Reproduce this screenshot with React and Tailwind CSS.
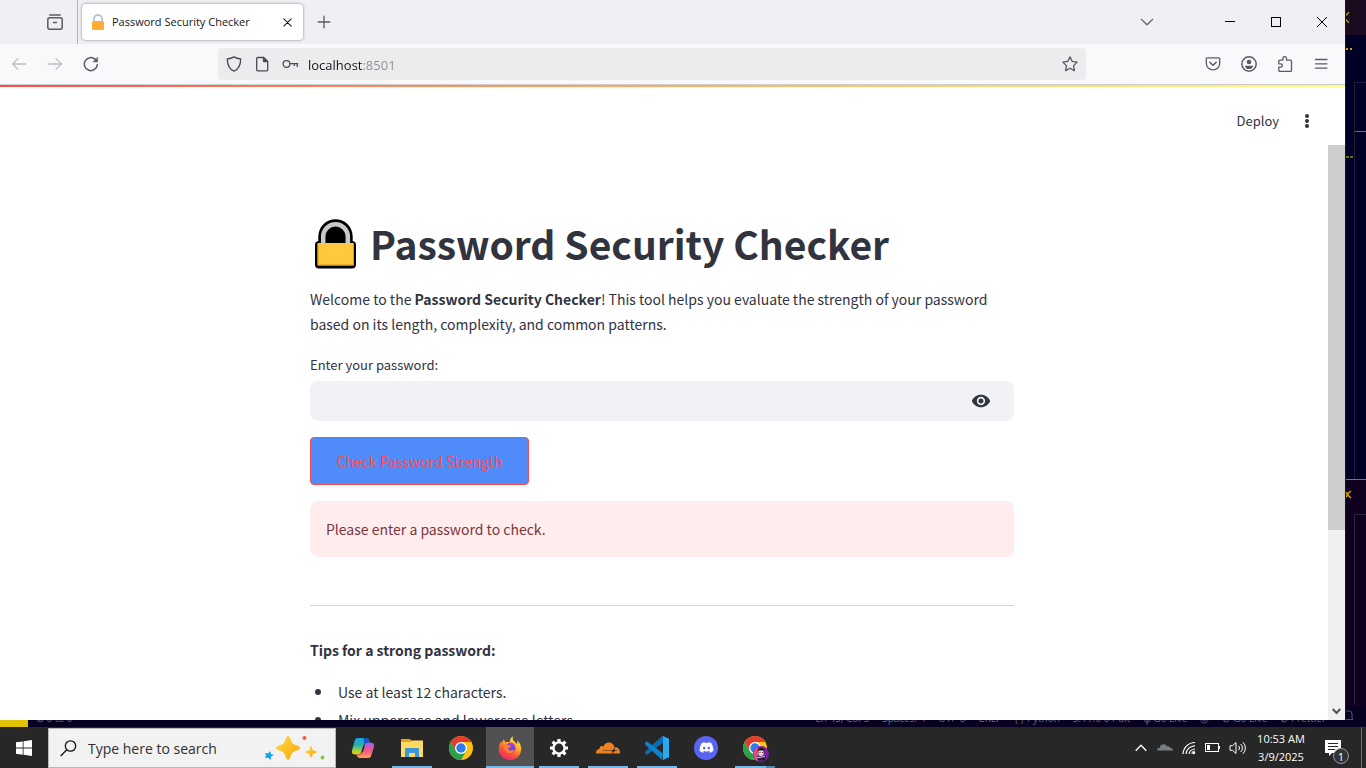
import React from "react";
import { MdVisibility } from "react-icons/md";
import { FaDiscord } from "react-icons/fa";
import { SiCloudflare } from "react-icons/si";

const systemFont = "font-['Open_Sans','Noto_Sans',sans-serif]";
const pageFont = "font-['Noto_Sans_CJK_SC',sans-serif]";

function Line({ children, className = "", size = 16 }) {
  return (
    <svg
      width={size}
      height={size}
      viewBox="0 0 16 16"
      fill="none"
      stroke="currentColor"
      strokeWidth="1.3"
      strokeLinecap="round"
      strokeLinejoin="round"
      className={className}
      aria-hidden="true"
    >
      {children}
    </svg>
  );
}

function TabBar() {
  return (
    <div className="flex h-11 shrink-0 bg-[#f0eff4] text-[#5b5b66]">
      <div className="flex w-[78px] items-center border-r border-[#b5b4bb] pl-[47px]">
        <button type="button" aria-label="Firefox View">
          <Line>
            <path d="M2.8 .9h10.400" strokeWidth="1.5" />
            <rect x="0.8" y="3.8" width="14.4" height="11.4" rx="2" strokeWidth="1.5" />
            <path d="M6.500 8.500h3" strokeWidth="1.5" />
          </Line>
        </button>
      </div>
      <div className="ml-1 mt-1 flex h-9 w-[221px] items-center rounded bg-white pl-2 pr-2 shadow-[0_0_3px_rgba(0,0,0,0.45)]">
        <svg width="16" height="16" viewBox="0 0 16 16" aria-hidden="true">
          <path d="M4 8V5a4 4 0 0 1 8 0v3" fill="none" stroke="#b4c5cf" strokeWidth="1.8" />
          <rect x="2" y="7" width="12" height="9" rx="1.5" fill="#ffac33" />
        </svg>
        <span className="ml-1.5 flex-1 whitespace-nowrap text-[11px] text-[#15141a]">
          Password Security Checker
        </span>
        <button type="button" aria-label="Close tab" className="grid h-4 w-4 place-items-center text-[#15141a]">
          <Line size={9}>
            <path d="M1.5 1.5l13 13M14.5 1.5l-13 13" strokeWidth="1.8" />
          </Line>
        </button>
      </div>
      <button type="button" aria-label="New tab" className="ml-3 grid w-[18px] place-items-center">
        <Line>
          <path d="M8 2.2v11.6M2.2 8h11.6" />
        </Line>
      </button>
      <div className="flex-1" />
      <button type="button" aria-label="List all tabs" className="mr-12 grid w-6 place-items-center">
        <Line>
          <path d="M2.4 5.4L8 10.8l5.6-5.4" />
        </Line>
      </button>
      <div className="flex text-black">
        <button type="button" aria-label="Minimize" className="grid w-[46px] place-items-center">
          <svg width="10" height="10"><path d="M0 4.5h10" stroke="currentColor" /></svg>
        </button>
        <button type="button" aria-label="Maximize" className="grid w-[46px] place-items-center">
          <svg width="10" height="10"><rect x=".5" y=".5" width="9" height="9" fill="none" stroke="currentColor" /></svg>
        </button>
        <button type="button" aria-label="Close" className="grid w-[46px] place-items-center">
          <svg width="10" height="10"><path d="M0 0l10 10M10 0L0 10" stroke="currentColor" /></svg>
        </button>
      </div>
    </div>
  );
}

function Toolbar() {
  return (
    <div className="flex h-[41px] shrink-0 items-center border-b border-[#cccccf] bg-[#f9f9fb] text-[#5b5b66]">
      <div className="flex w-[218px] gap-5 pl-[11px]">
        <button type="button" aria-label="Back" className="text-[#bcbcc2]">
          <Line><path d="M14.6 8H1.6M7 2.6L1.5 8 7 13.4" /></Line>
        </button>
        <button type="button" aria-label="Forward" className="text-[#bcbcc2]">
          <Line><path d="M1.4 8h13M9 2.6L14.5 8 9 13.4" /></Line>
        </button>
        <button type="button" aria-label="Reload">
          <Line>
            <path d="M14.3 8.6a6.5 6.5 0 1 1-2-5.2L13.6 4.700" strokeWidth="1.5" />
            <path d="M14.6 1.4v4.500h-4.500z" fill="currentColor" strokeWidth=".5" />
          </Line>
        </button>
      </div>
      <div className="flex h-8 flex-1 items-center rounded bg-[#ececee] px-2">
        <Line className="text-[#4a4a54]">
          <path d="M8 .9c2 1.300 4.200 1.900 6.700 2.100-.1 6-1.700 10.200-6.700 12.200C3 13.200 1.400 9 1.300 3 3.800 2.800 6 2.200 8 .9z" />
        </Line>
        <Line className="ml-3 text-[#4a4a54]">
          <path d="M3.700 1.500h6l4 4v8.300a1 1 0 0 1-1 1h-9a1 1 0 0 1-1-1V2.500a1 1 0 0 1 1-1z" />
          <path d="M9.500 1.600v4h4.200z" fill="currentColor" />
        </Line>
        <svg width="18" height="16" viewBox="0 0 18 16" fill="none" stroke="#4a4a54" strokeWidth="1.300" className="ml-3" aria-hidden="true">
          <circle cx="4.500" cy="8" r="3.400" />
          <path d="M7.900 7.700h8.300M12.300 8v2M15.300 8v3" />
        </svg>
        <input
          type="text"
          aria-label="Address"
          defaultValue="localhost:8501"
          className="ml-2 h-8 min-w-0 flex-1 bg-[linear-gradient(to_right,#15141a_55px,#8b8b92_55px)] bg-clip-text pt-0.5 text-[13px] text-transparent outline-none"
        />
        <button type="button" aria-label="Bookmark">
          <Line>
            <path d="M8 .9l2.200 4.500 4.900.7-3.500 3.500.8 5L8 12.200l-4.400 2.400.8-5L.9 6.100l4.900-.7z" />
          </Line>
        </button>
      </div>
      <div className="flex w-[259px] justify-end gap-5 pr-4">
        <button type="button" aria-label="Pocket">
          <Line>
            <path d="M2.300 1.800h11.400a1 1 0 0 1 1 1v4.400a6.700 6.700 0 0 1-13.400 0V2.800a1 1 0 0 1 1-1z" />
            <path d="M4.800 6.300L8 9.300l3.200-3" strokeWidth="1.500" />
          </Line>
        </button>
        <button type="button" aria-label="Account">
          <Line>
            <circle cx="8" cy="8" r="7.200" strokeWidth="1.500" />
            <circle cx="8" cy="6" r="2.300" fill="currentColor" stroke="none" />
            <path d="M4 9.700h8c0 2-1.700 3.400-4 3.400s-4-1.400-4-3.400z" fill="currentColor" stroke="none" />
          </Line>
        </button>
        <button type="button" aria-label="Extensions">
          <Line>
            <path d="M1.800 5.200a1 1 0 0 1 1-1h3.100V2.400a1.800 1.800 0 0 1 3.600 0v1.800h4a1 1 0 0 1 1 1v9.200a1 1 0 0 1-1 1H2.800a1 1 0 0 1-1-1v-3.200h1.900a1.700 1.700 0 0 0 0-3.400H1.800z" />
          </Line>
        </button>
        <button type="button" aria-label="Menu">
          <Line><path d="M2.500 3.500h11.500M2.500 7.800h11.500M2.500 12.100h11.500" /></Line>
        </button>
      </div>
    </div>
  );
}

function PadlockEmoji() {
  return (
    <svg width="44" height="52" viewBox="0 -2 44 52" aria-hidden="true" className="shrink-0">
      <path d="M4.300 22v-4.500a17.200 17.200 0 0 1 34.400 0V22a4 4 0 0 1 3.300 4v19.500a4 4 0 0 1-4 4H5a4 4 0 0 1-4-4V26a4 4 0 0 1 3.300-4z" fill="#000" />
      <path d="M9.200 25v-7.500a12.300 12.300 0 0 1 24.600 0V25" fill="none" stroke="#c8c8c8" strokeWidth="4.500" />
      <rect x="3.500" y="24" width="36.500" height="22.500" rx="1" fill="#ffc83d" />
      <path d="M4 25v21h35.500V25" fill="none" stroke="#d79a1c" strokeWidth="1" />
    </svg>
  );
}

function StreamlitPage() {
  return (
    <div className={`flex min-h-0 flex-1 flex-col bg-white text-[#31333f] ${pageFont}`}>
      <div className="h-0.5 shrink-0 bg-gradient-to-r from-[#ff4b4b] to-[#fffd80]" />
      <header className="flex h-[58px] shrink-0 items-center justify-end pr-[30px] pt-2.5">
        <button type="button" className="text-[13px] leading-5">Deploy</button>
        <button type="button" aria-label="Main menu" className="ml-5 grid h-4 w-4 place-items-center">
          <svg width="16" height="16" fill="currentColor">
            <circle cx="8" cy="3" r="2" />
            <circle cx="8" cy="8" r="2" />
            <circle cx="8" cy="13" r="2" />
          </svg>
        </button>
      </header>
      <div className="flex min-h-0 flex-1">
        <main className="min-w-0 flex-1 overflow-hidden pr-1">
          <div className="mx-auto max-w-[736px] px-4 pt-[72px] text-[14px] leading-[25px]">
            <h1 className="flex items-center gap-3 whitespace-nowrap pl-1 text-[39px] font-bold leading-[52px]">
              <PadlockEmoji />
              Password Security Checker
            </h1>
            <p className="mt-[18px]">
              Welcome to the <strong>Password Security Checker</strong>! This tool helps you evaluate the strength
              of your password based on its length, complexity, and common patterns.
            </p>
            <label htmlFor="password" className="mt-[18px] mb-1.5 block text-[13px] leading-5">
              Enter your password:
            </label>
            <div className="flex h-10 items-center rounded-lg bg-[#f0f2f6] pr-[23px]">
              <input id="password" type="password" className="h-10 min-w-0 flex-1 bg-transparent px-3 outline-none" />
              <button type="button" aria-label="Show password">
                <MdVisibility size={20} />
              </button>
            </div>
            <button
              type="button"
              className="mt-4 block h-12 w-[219px] rounded border border-[#ff4b4b] bg-[#4f8bf9] text-[#ff4b4b]"
            >
              Check Password Strength
            </button>
            <div role="alert" className="mt-4 flex h-14 items-center rounded-lg bg-[#ffecec] px-4 text-[#7d353b]">
              Please enter a password to check.
            </div>
            <hr className="mt-12 border-t border-[#d6d6d9]" />
            <p className="mt-8 font-bold">Tips for a strong password:</p>
            <ul className="mt-[15px] leading-7">
              {["Use at least 12 characters.", "Mix uppercase and lowercase letters."].map((tip) => (
                <li
                  key={tip}
                  className="flex items-center gap-[17px] pl-[5px] before:h-1.5 before:w-1.5 before:rounded-full before:bg-[#31333f]"
                >
                  {tip}
                </li>
              ))}
            </ul>
          </div>
        </main>
        <div className="flex w-[17px] shrink-0 flex-col bg-[#f0f0f0]" aria-hidden="true">
          <div className="h-[67%] bg-[#cdcdcd]" />
          <div className="flex-1" />
          <div className="grid h-[17px] place-items-center text-[#505050]">
            <svg width="9" height="7" fill="none" stroke="currentColor" strokeWidth="2"><path d="M.7 1l3.800 4 3.800-4" /></svg>
          </div>
        </div>
      </div>
    </div>
  );
}

function EditorEdge() {
  return (
    <div className="flex w-[21px] shrink-0 flex-col overflow-hidden border-l border-[#17171c] bg-[#000026]" aria-hidden="true">
      <div className="h-[35px] shrink-0 bg-[#1a0b20] pt-3">
        <svg width="4" height="11" fill="none" stroke="#d9a800" strokeWidth="1.200"><path d="M3 0L-2 5.500 3 11" /></svg>
      </div>
      <div className="h-[47px] shrink-0 pt-[13px]">
        <svg width="8" height="3" fill="#c79a12"><rect width="2" height="2" /><rect x="4" width="2" height="2" /></svg>
      </div>
      <div className="flex flex-1">
        <div className="w-2 pt-[74px]">
          <svg width="8" height="2" fill="#6b6a12"><rect width="3" height="2" /><rect x="4" width="3" height="2" /></svg>
        </div>
        <div className="flex-1 border-l border-t border-[#1b1b3c]">
          <div className="mt-12 h-px bg-[#0e91ab]" />
        </div>
      </div>
      <div className="h-px shrink-0 bg-[#e0531f]" />
      <div className="h-[34px] shrink-0 bg-[#10001f] pt-[10px]">
        <svg width="6" height="9" fill="none" stroke="#d9a800" strokeWidth="1.500"><path d="M5 1L1 4.500l4 3.500M0 2l2 2.500L0 7" /></svg>
      </div>
      <div className="flex h-[191px] shrink-0 bg-[#10001f] pl-2">
        <div className="flex-1 border-l border-t border-[#33243d]" />
      </div>
      <div className="h-[15px] shrink-0 bg-[#080021] pt-[5px]">
        <svg width="8" height="10" fill="none" stroke="#525073"><path d="M0 1h3a3 3 0 0 1 3 3v4l1 1.500H0" /></svg>
      </div>
    </div>
  );
}

function EditorStatus() {
  return (
    <div className={`flex h-[7px] shrink-0 items-end overflow-hidden bg-[#080021] text-[10px] text-[#66657a] ${systemFont}`}>
      <div className="h-[22px] w-7 shrink-0 bg-[#e2c400]" />
      <div className="h-[22px] pl-2 leading-[26px]">⊗ 0 ⚠ 0</div>
      <div className="flex h-[22px] flex-1 justify-end gap-[13px] whitespace-nowrap pr-10 leading-[26px]">
        <span>Ln 45, Col 5</span>
        <span>Spaces: 4</span>
        <span>UTF-8</span>
        <span>CRLF</span>
        <span>{"{ }"} Python</span>
        <span>3.11.0 64-bit</span>
        <span>ϕ Go Live</span>
        <span>◎</span>
        <span>⊘ Go Live</span>
        <span>⊘ Prettier</span>
      </div>
    </div>
  );
}

function CopilotIcon() {
  return (
    <svg width="24" height="24" viewBox="0 0 24 24" aria-hidden="true">
      <defs>
        <linearGradient id="cpA" x1="0" y1="0" x2="0" y2="1">
          <stop offset="0" stopColor="#1aa5e8" />
          <stop offset=".45" stopColor="#25b5a5" />
          <stop offset=".8" stopColor="#b8d330" />
          <stop offset="1" stopColor="#f0c51d" />
        </linearGradient>
        <linearGradient id="cpB" x1="0" y1="0" x2="0" y2="1">
          <stop offset="0" stopColor="#a95bea" />
          <stop offset=".5" stopColor="#f0578f" />
          <stop offset="1" stopColor="#ffa34f" />
        </linearGradient>
      </defs>
      <path d="M6.500 2h8.800c1.400 0 2.200.8 2.600 2l1 3h-3.300c-1.600 0-2.500 1-3 2.500L10.500 16c-.6 1.600-1.700 2.500-3.500 2.500H4C1.500 18.500.4 17 1 14.500L3.600 5C4.100 3 5 2 6.500 2z" fill="url(#cpA)" />
      <path d="M12.500 2h2.800c1.400 0 2.200.8 2.600 2l1 3h-3.300c-1.200 0-2 .5-2.500 1.500z" fill="#1456c7" />
      <path d="M17.500 22H8.700c-1.400 0-2.200-.8-2.600-2l-.6-1.500H8c1.600 0 2.800-1 3.300-2.500L13.500 9c.6-1.500 1.700-2.200 3.500-2.200h3c2.500 0 3.600 1.400 3 3.700L20.400 19c-.5 2-1.400 3-2.900 3z" fill="url(#cpB)" />
      <path d="M13.200 9.500L11 16" stroke="#272727" strokeWidth="1.500" />
    </svg>
  );
}

function ExplorerIcon() {
  return (
    <svg width="24" height="24" viewBox="0 0 24 24" aria-hidden="true">
      <path d="M1 3h9l1.500 2H23v4H1z" fill="#e8a20c" />
      <path d="M1 6h9l1.500-1.500H23V21H1z" fill="#ffd866" />
      <path d="M5 21v-8a1 1 0 0 1 1-1h12a1 1 0 0 1 1 1v8h-4v-4H9v4z" fill="#3b97d8" />
    </svg>
  );
}

function ChromeIcon({ avatar = false }) {
  return (
    <svg width="24" height="24" viewBox="0 0 24 24" overflow="visible" aria-hidden="true">
      <circle cx="12" cy="12" r="12" fill="#fbc116" />
      <path d="M12 12L6.800 15 1.600 6A12 12 0 0 1 22.400 6H12z" fill="#e33b2e" />
      <path d="M12 12l5.200 3L12 24A12 12 0 0 1 1.600 6l5.200 9z" fill="#2ba14b" />
      <circle cx="12" cy="12" r="6" fill="#fff" />
      <circle cx="12" cy="12" r="4.700" fill="#2e7cf0" />
      {avatar && (
        <g>
          <circle cx="18" cy="18" r="8" fill="#7b1fa2" />
          <path d="M10.200 18a8 8 0 0 1 5-7.500v15a8 8 0 0 1-5-7.500z" fill="#df4b86" />
          <path d="M14.500 14.500c.6-3.500 6.400-3.500 7 0l-1 2h-5z" fill="#16121c" />
          <path d="M15.500 14.500h5v3.500a2.500 2 0 0 1-5 0z" fill="#f2d9cf" />
          <path d="M13 20.500l5 .5 5-1-1 4.500h-7z" fill="#20202c" />
          <path d="M13 22l9-1.500" stroke="#c9c9d6" />
          <circle cx="17" cy="16.500" r=".5" /><circle cx="19.500" cy="16.500" r=".5" />
        </g>
      )}
    </svg>
  );
}

function FirefoxIcon() {
  return (
    <svg width="24" height="24" viewBox="0 0 24 24" aria-hidden="true">
      <defs>
        <linearGradient id="ffA" x1=".8" y1="0" x2=".25" y2="1">
          <stop offset="0" stopColor="#fff14f" />
          <stop offset=".35" stopColor="#ffb52c" />
          <stop offset=".65" stopColor="#ff5a35" />
          <stop offset="1" stopColor="#ef1f72" />
        </linearGradient>
      </defs>
      <path d="M15.200 0c-1 2-.5 3.800 1 5.200C18 7 18.700 7.500 19 8.500c.5-1.500.3-3 0-4 3 2.200 4.400 5.500 4.200 9C22.900 19.500 18 24 12 24S.7 19.300.7 13.200C.7 9.500 2 7 3.400 5.200l.4 2C4.500 6 5 4.700 5.200 3.500c1.300.8 2 1.800 2.400 3 1.500-.7 2.900-.6 4.200-.1-.2-2.500 1-5 3.400-6.400z" fill="url(#ffA)" />
      <circle cx="12.200" cy="12.400" r="5.300" fill="#7543e6" />
      <path d="M5.500 9c2-1 3.800-.5 5.500.3l2.200.6c-.2 1.600-2.300 1.600-3 2.600-.4 1 .7 2.200 2.500 2 1.500-.1 2.500-.8 4-.2-1 2.300-3 3.300-5 3.200-3.700-.2-6-4-6.200-8.500z" fill="#ff812f" />
      <path d="M11 6.500c3.500-.5 6 1.500 6.500 4.500-1.500-2-3.500-2.500-5-1.500z" fill="#b33de0" />
    </svg>
  );
}

function GearIcon() {
  return (
    <svg width="20" height="20" viewBox="0 0 20 20" fill="none" stroke="#fff" aria-hidden="true">
      <circle cx="10" cy="10" r="5.600" strokeWidth="2.400" />
      <path d="M10 1v3M10 16v3M1 10h3M16 10h3M3.600 3.600l2.200 2.200M14.200 14.200l2.200 2.200M3.600 16.400l2.200-2.200M14.200 5.800l2.200-2.200" strokeWidth="3.200" />
    </svg>
  );
}

function CloudflareIcon() {
  return <SiCloudflare size={24} className="text-[#f38020]" />;
}

function CodeIcon() {
  return (
    <svg width="24" height="24" viewBox="0 0 24 24" aria-hidden="true">
      <path d="M18 6.500L1.800 19 0 17.300v-1.600L17 .2z" fill="#0a6cb4" />
      <path d="M18 17.500L1.800 5.200 0 6.800v1.600L17 23.800z" fill="#0c85d0" />
      <path d="M17 .2c.5-.3 1-.3 1.500 0L24 2.800v18.400l-5.500 2.600c-.5.300-1 .3-1.500 0 .6.100 1-.3 1-1V1.200c0-.7-.4-1.100-1-1z" fill="#2aa8f2" />
      <path d="M17 .2c.6-.1 1 .3 1 1v5.300L12 11z" fill="#0a6cb4" />
    </svg>
  );
}

function DiscordIcon() {
  return (
    <span className="grid h-6 w-6 place-items-center rounded-full bg-[#5865f2] text-white">
      <FaDiscord size={15} />
    </span>
  );
}

const apps = [
  { name: "Copilot", icon: <CopilotIcon /> },
  { name: "File Explorer", icon: <ExplorerIcon />, bar: "w-10" },
  { name: "Google Chrome", icon: <ChromeIcon /> },
  { name: "Firefox", icon: <FirefoxIcon />, bar: "w-12", active: true },
  { name: "Settings", icon: <GearIcon />, bar: "w-10" },
  { name: "Cloudflare WARP", icon: <CloudflareIcon />, bar: "w-10" },
  { name: "Visual Studio Code", icon: <CodeIcon />, bar: "w-10" },
  { name: "Discord", icon: <DiscordIcon /> },
  { name: "Chrome profile", icon: <ChromeIcon avatar />, bar: "w-10", stacked: true },
];

function Sparkles() {
  return (
    <svg width="62" height="26" viewBox="0 0 62 26" aria-hidden="true">
      <defs>
        <linearGradient id="spark" x1="0" y1="0" x2="1" y2="1">
          <stop offset="0" stopColor="#ffdb4d" />
          <stop offset="1" stopColor="#f7a600" />
        </linearGradient>
      </defs>
      <path d="M24 1c1.500 0 2 1.500 3 4.500.9 2.700 1.700 3.500 4.400 4.400 3 1 4.500 1.500 4.500 3s-1.500 2-4.500 3c-2.700.9-3.500 1.700-4.400 4.400-1 3-1.500 4.500-3 4.500s-2-1.500-3-4.500c-.9-2.700-1.700-3.500-4.400-4.400-3-1-4.500-1.500-4.500-3s1.500-2 4.500-3c2.700-.9 3.500-1.700 4.400-4.400 1-3 1.500-4.500 3-4.500z" fill="url(#spark)" />
      <path d="M47 10.500c.8 0 1 4 2 4.800s4 .9 4 1.700-3.200 1-4 1.900-1.200 3.600-2 3.600-1-2.800-2-3.600-4-1.100-4-1.900 3-.9 4-1.700 1.200-4.800 2-4.800z" fill="url(#spark)" />
      <path d="M6 16l1 3 2.800 1-2.600 1.500L6.500 25l-2.300-2.300L1 23l1-2.700L.8 18l3.400.6z" fill="#12a5ee" />
      <circle cx="40.500" cy="3" r="2" fill="#f2602b" />
      <circle cx="58.500" cy="22.500" r="2" fill="#8bc53f" />
    </svg>
  );
}

function Taskbar() {
  return (
    <footer className={`flex h-[41px] shrink-0 bg-[#272727] text-white ${systemFont}`}>
      <button type="button" aria-label="Start" className="grid w-12 shrink-0 place-items-center">
        <svg width="16" height="16" viewBox="0 0 16 16" fill="currentColor">
          <path d="M0 2.300L6.700 1.400v6.200H0zM7.500 1.300L16 0v7.600H7.500zM0 8.400h6.700v6.300L0 13.700zM7.500 8.400H16V16l-8.500-1.200z" />
        </svg>
      </button>
      <form className="mt-px flex w-72 shrink-0 items-center border border-[#b9b9b9] bg-[#f2f2f2] pl-[11px] pr-[9px]" onSubmit={(e) => e.preventDefault()}>
        <svg width="17" height="17" viewBox="0 0 17 17" fill="none" stroke="#111" strokeWidth="1.300" aria-hidden="true">
          <circle cx="10.500" cy="6" r="5.200" />
          <path d="M6.800 9.800L.7 16" />
        </svg>
        <input
          type="text"
          aria-label="Search"
          placeholder="Type here to search"
          className="ml-[11px] min-w-0 flex-1 bg-transparent text-[14px] outline-none placeholder:text-[#2f2f2f]"
        />
        <Sparkles />
      </form>
      <nav className="ml-[3px] flex gap-px" aria-label="Taskbar apps">
        {apps.map((app) => (
          <button
            key={app.name}
            type="button"
            aria-label={app.name}
            className={`flex w-12 flex-col items-center ${app.active ? "bg-[#515151]" : ""}`}
          >
            <span className="grid min-h-0 flex-1 place-items-center pt-0.5">{app.icon}</span>
            <span className={`flex h-0.5 ${app.bar ? `${app.bar} bg-[#76b9ed]` : ""}`}>
              {app.stacked && <span className="ml-auto w-[9px] bg-[#5484a8]" />}
            </span>
          </button>
        ))}
      </nav>
      <div className="ml-auto flex items-center">
        <button type="button" aria-label="Show hidden icons" className="grid w-6 place-items-center">
          <svg width="12" height="8" fill="none" stroke="currentColor" strokeWidth="1.300"><path d="M.7 6.700L6 1.200l5.300 5.500" /></svg>
        </button>
        <button type="button" aria-label="OneDrive" className="grid w-6 place-items-center text-[#777c80]">
          <svg width="16" height="10" viewBox="0 0 16 10" fill="currentColor"><path d="M0 7.500A2.500 2.500 0 0 1 2.800 5 3.500 3.500 0 0 1 6 1.500 3.500 3.500 0 0 1 10 3.500 3 3 0 0 1 13.500 5 2 2 0 0 1 15.800 7.500z" /></svg>
        </button>
        <button type="button" aria-label="Network" className="grid w-6 place-items-center">
          <svg width="14" height="14" viewBox="0 0 14 14" fill="none" stroke="currentColor" strokeWidth="1.200">
            <path d="M1 13A12 12 0 0 1 13 1.500M4 13A9 9 0 0 1 13 4.800M7 13a6 6 0 0 1 6-5" />
            <circle cx="11.700" cy="11.700" r="1.500" fill="currentColor" stroke="none" />
            <path d="M9.500 13a3 3 0 0 1 3.500-2.800" opacity=".5" />
          </svg>
        </button>
        <button type="button" aria-label="Battery" className="grid w-6 place-items-center">
          <svg width="16" height="10" fill="none" stroke="currentColor">
            <rect x=".5" y=".5" width="13" height="8" />
            <path d="M14.500 3v3" />
            <rect x="2" y="2" width="3" height="5" fill="currentColor" stroke="none" />
          </svg>
        </button>
        <button type="button" aria-label="Volume" className="grid w-6 place-items-center">
          <svg width="17" height="14" viewBox="0 0 17 14" fill="none" stroke="currentColor">
            <path d="M1 4.700h2.500L7 1.500v11L3.500 9.300H1zM9.500 4.800a3 3 0 0 1 0 4.400M11.700 3a5.500 5.500 0 0 1 0 8M14 1.200a8.300 8.300 0 0 1 0 11.600" />
          </svg>
        </button>
        <div className="w-16 text-center text-[11px] leading-[18px]">
          <div>10:53 AM</div>
          <div>3/9/2025</div>
        </div>
        <button type="button" aria-label="Notifications" className="relative mr-2 grid h-full w-10 place-items-center">
          <svg width="16" height="16" viewBox="0 0 16 16"><path d="M0 0h16v13H7l-3 3v-3H0z" fill="#fff" /><path d="M3 3.500h10M3 6.500h10M3 9.500h7" stroke="#272727" /></svg>
          <span className="absolute bottom-1 right-1 grid h-4 w-4 place-items-center rounded-full border border-[#9a9a9a] bg-[#333] text-[11px] leading-none">
            1
          </span>
        </button>
        <div className="h-full w-[5px] border-l border-[#707070]" />
      </div>
    </footer>
  );
}

export default function App() {
  return (
    <div className="flex h-screen flex-col overflow-hidden bg-[#080021]">
      <div className="flex min-h-0 flex-1">
        <div className={`flex min-w-0 flex-1 flex-col ${systemFont}`}>
          <TabBar />
          <Toolbar />
          <StreamlitPage />
        </div>
        <EditorEdge />
      </div>
      <EditorStatus />
      <Taskbar />
    </div>
  );
}
